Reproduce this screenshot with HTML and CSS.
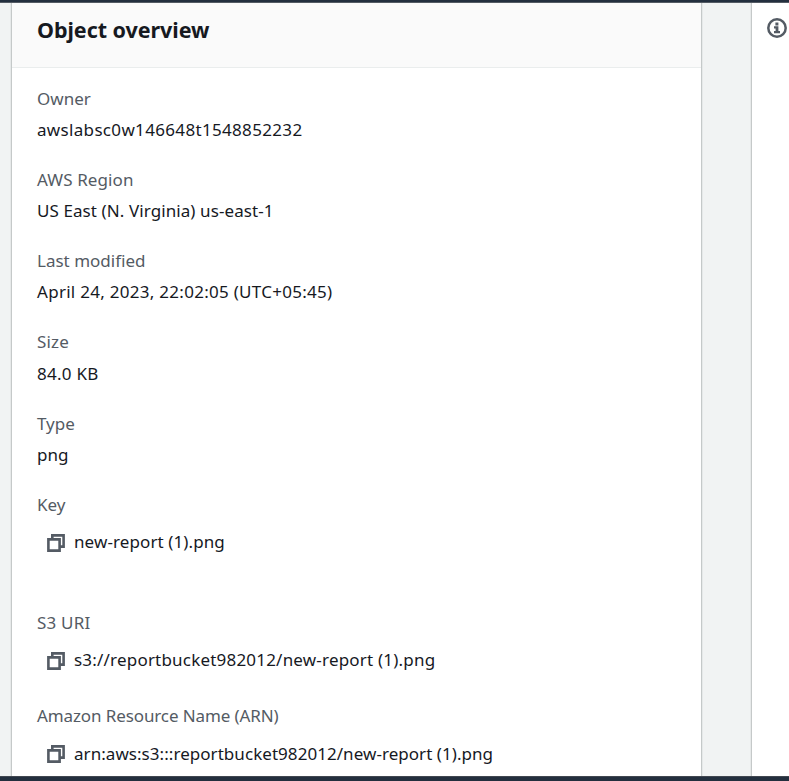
FILE: index.html
```html
<!DOCTYPE html>
<html lang="en">
<head>
<meta charset="utf-8">
<title>Object overview</title>
<link rel="stylesheet" href="styles.css">
</head>
<body>
<svg class="defs" width="0" height="0" aria-hidden="true">
  <symbol id="copy" viewBox="0 0 18 18"><path d="M5.3 4.5V1.4h11.3V12.6H13.5M1.4 5.4h11.2v11.2H1.4z" fill="none" stroke="#545b64" stroke-width="2.6"/></symbol>
</svg>
<div class="topbar"></div>
<div class="page">
  <main class="card">
    <header class="card-header"><h2>Object overview</h2></header>
    <dl class="fields">
      <div class="field"><dt>Owner</dt><dd class="v-owner">awslabsc0w146648t1548852232</dd></div>
      <div class="field"><dt class="l-region">AWS Region</dt><dd class="v-region">US East (N. Virginia) us-east-1</dd></div>
      <div class="field"><dt>Last modified</dt><dd class="v-modified">April 24, 2023, 22:02:05 (UTC+05:45)</dd></div>
      <div class="field size"><dt>Size</dt><dd>84.0 KB</dd></div>
      <div class="field"><dt>Type</dt><dd>png</dd></div>
      <div class="field key"><dt>Key</dt><dd class="copyable"><svg class="copy"><use href="#copy"/></svg><span>new-report (1).png</span></dd></div>
      <div class="field uri"><dt>S3 URI</dt><dd class="copyable"><svg class="copy"><use href="#copy"/></svg><span>s3://reportbucket982012/new-report (1).png</span></dd></div>
      <div class="field arn"><dt>Amazon Resource Name (ARN)</dt><dd class="copyable"><svg class="copy"><use href="#copy"/></svg><span>arn:aws:s3:::reportbucket982012/new-report (1).png</span></dd></div>
    </dl>
  </main>
  <aside class="tools">
    <svg class="info" viewBox="0 0 20 20"><circle cx="10" cy="10" r="8.7" fill="none" stroke="#545b64" stroke-width="2.5"/><path d="M8.4 4.6h3v2.8h-3zM7 8.3h4.4v4.6h1.6v2.3H7v-2.3h1.6v-2.4H7z" fill="#545b64"/></svg>
  </aside>
</div>
<div class="bottombar"></div>
</body>
</html>
```
FILE: styles.css
```css
* { box-sizing: border-box; }
body {
  margin: 0;
  height: 781px;
  display: flex;
  flex-direction: column;
  overflow: hidden;
  background: #f1f3f3;
  color: #16191f;
  font: 17px/24px "Noto Sans", "Open Sans", sans-serif;
}
.defs { position: absolute; }
.topbar { height: 3px; flex: none; background: #232f3e; border-bottom: 1px solid #545b64; }
.bottombar { height: 5px; flex: none; background: #232f3e; border-top: 1px solid #414750; }
.page { flex: 1; min-height: 0; display: flex; justify-content: space-between; overflow: hidden; }
.card {
  width: 691px;
  margin-left: 11px;
  background: #fff;
  border: solid #c5c9c9;
  border-width: 0 1px;
  box-shadow: 0 0 0 1px #e6e9e9;
}
.card-header { height: 65px; padding: 12px 25px 0; background: #fafafa; border-bottom: 1px solid #eaeded; }
h2 { margin: 0; font-size: 21.5px; line-height: 30px; font-weight: 700; letter-spacing: -0.05px; }
.fields { margin: 0; padding: 19px 25px 0; }
.field { height: 81px; white-space: nowrap; }
dt { height: 31px; color: #545b64; }
dd { margin: 0; height: 24px; }
.l-region { letter-spacing: 0.1px; }
.v-owner { letter-spacing: 0.33px; }
.v-region { letter-spacing: 0.09px; }
.v-modified { letter-spacing: 0.28px; }
.size { height: 82px; }
.size dt { height: 32px; letter-spacing: 0.2px; }
.size dd { letter-spacing: 0.25px; }
.key { height: 118px; }
.key span { letter-spacing: 0.1px; }
.uri { height: 93px; }
.uri dt, .uri span { letter-spacing: 0.2px; }
.arn dt { letter-spacing: -0.11px; }
.arn span { letter-spacing: 0.05px; }
.copyable { display: flex; align-items: center; padding-left: 10px; margin-top: 6px; gap: 9px; }
.arn .copyable { margin-top: 7px; }
.copy { width: 18px; height: 18px; flex: none; margin-top: 2px; }
.arn .copy { margin-top: 0; }
.tools { width: 38px; background: #fff; border-left: 1px solid #c5c9c9; box-shadow: -1px 0 #e6e9e9; padding: 15px 0 0 15px; }
.info { display: block; width: 20px; height: 20px; }
```
